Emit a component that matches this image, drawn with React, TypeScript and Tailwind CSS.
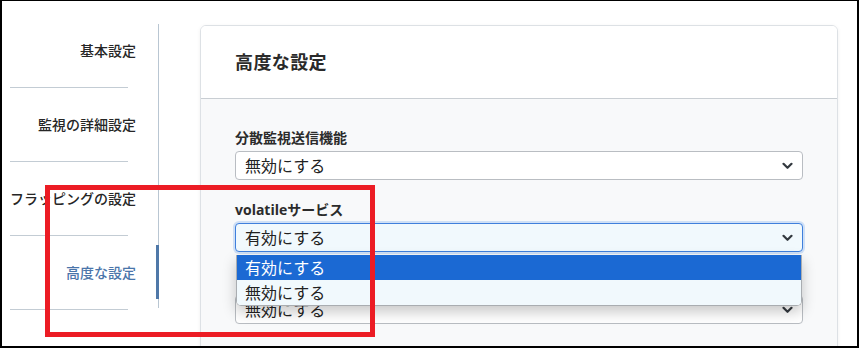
import React from "react";

const font = { fontFamily: '"Open Sans", "Noto Sans CJK JP", sans-serif' };

function Chevron() {
  return (
    <svg width="11" height="8" viewBox="0 0 11 8" className="shrink-0">
      <path d="M1.5 1.8 L5.5 5.8 L9.5 1.8" fill="none" stroke="#343a40" strokeWidth="2.2" strokeLinecap="round" strokeLinejoin="round" />
    </svg>
  );
}

function SideItem({ label, active }: { label: string; active?: boolean }) {
  return (
    <div className="flex flex-col">
      <div
        className={`h-[73px] w-[126px] flex items-center justify-end whitespace-nowrap text-[14px] font-medium ${
          active ? "text-[#4a75aa]" : "text-[#262626]"
        }`}
      >
        {label}
      </div>
      <div className="h-px w-[118px] bg-[#c3ccd4]" />
    </div>
  );
}

function Select({ value, focused }: { value: string; focused?: boolean }) {
  return (
    <div
      className={`h-[29px] w-full rounded-[4px] border flex items-center justify-between pl-[9px] pr-[9px] text-[16px] text-[#222] ${
        focused
          ? "border-[#3f7fdc] bg-[#f1f9fd] shadow-[0_0_0_2px_#cfe0f6]"
          : "border-[#b9bdc2] bg-white"
      }`}
    >
      <span className="leading-none">{value}</span>
      <Chevron />
    </div>
  );
}

function Field({ label, value, focused, children }: { label?: string; value: string; focused?: boolean; children?: React.ReactNode }) {
  return (
    <div className="flex flex-col mb-[19px] relative">
      <div className="h-[21px] leading-[21px] text-[14px] font-bold text-[#2b2b2b] mb-[3px]">{label}</div>
      <Select value={value} focused={focused} />
      {children}
    </div>
  );
}

export default function App() {
  return (
    <div
      style={font}
      className="relative w-[859px] h-[348px] overflow-hidden bg-white border-l-2 border-t border-r-2 border-b-2 border-black flex flex-row"
    >
      {/* Sidebar */}
      <div className="flex flex-row pl-[8px] pt-[13px] shrink-0">
        <div className="flex flex-col">
          <SideItem label="基本設定" />
          <SideItem label="監視の詳細設定" />
          <SideItem label="フラッピングの設定" />
          <SideItem label="高度な設定" active />
        </div>
        <div className="ml-[20px] w-[3px] flex flex-col mt-[10px]">
          <div className="h-[221px] w-px ml-auto bg-[#b9c6d2]" />
          <div className="h-[54px] w-[3px] bg-[#4f78a8]" />
          <div className="h-[9px] w-px ml-auto bg-[#b9c6d2]" />
        </div>
      </div>

      {/* Card */}
      <div className="ml-[41px] mt-[24px] w-[638px] h-[400px] shrink-0 rounded-[6px] border border-[#dde1e5] shadow-[0_1px_4px_rgba(0,0,0,0.06)] overflow-hidden flex flex-col">
        <div className="h-[73px] shrink-0 bg-white flex items-center px-[34px] border-b border-[#c9ced3]">
          <span className="text-[18px] font-bold text-[#2a2a2a] tracking-[0.4px]">高度な設定</span>
        </div>
        <div className="flex-1 bg-[#f8f9fa] pt-[28px] px-[34px] flex flex-col">
          <Field label="分散監視送信機能" value="無効にする" />
          <Field label="volatileサービス" value="有効にする" focused>
            <div className="absolute left-[1px] right-[1px] top-[56px] z-10 flex flex-col rounded-b-[5px] overflow-hidden border-b border-x border-[#a9adb1] shadow-[0_6px_14px_rgba(0,0,0,0.22)] text-[16px]">
              <div className="h-[25px] bg-[#1b69d3] text-white flex items-center pl-[8px]">有効にする</div>
              <div className="h-[25px] bg-[#f1f9fd] text-[#222] flex items-center pl-[8px]">無効にする</div>
            </div>
          </Field>
          <Field value="無効にする" />
        </div>
      </div>

      {/* Red annotation rectangle */}
      <div className="absolute left-[43px] top-[184px] w-[330px] h-[152px] border-[5px] border-[#ec1c24] z-20 pointer-events-none" />
    </div>
  );
}
